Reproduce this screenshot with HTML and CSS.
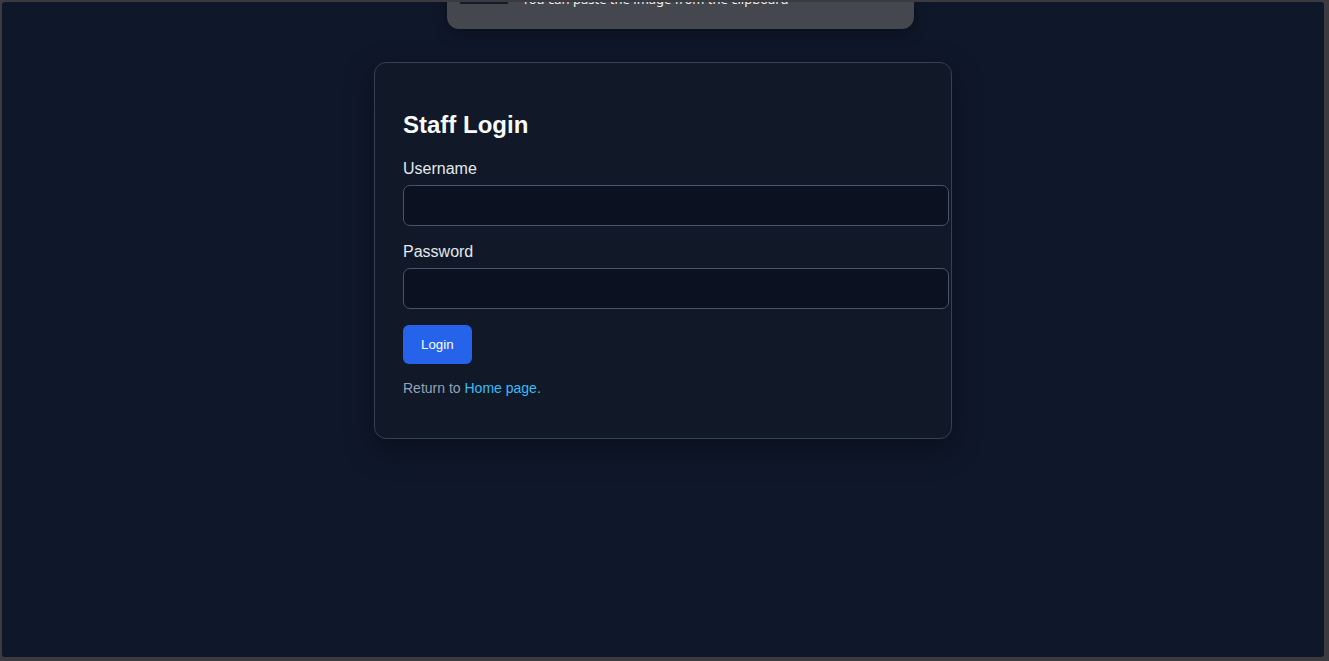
FILE: index.html
```html
<!DOCTYPE html>
<html lang="en">
<head>
    <meta charset="UTF-8">
    <meta name="viewport" content="width=device-width, initial-scale=1.0">
    <title>Staff Login</title>
    <link rel="stylesheet" href="styles.css">
</head>
<body>
<div class="window">
    <div class="toast">
        <div class="toast-thumb"></div>
        <span class="toast-text">You can paste the image from the clipboard</span>
    </div>

    <div class="card">
        <h2>Staff Login</h2>
        <form class="login-form" onsubmit="return false;">
            <label for="username">Username</label>
            <input type="text" id="username" class="first">
            <label for="password">Password</label>
            <input type="password" id="password">
            <button type="submit">Login</button>
        </form>
        <p class="back">Return to <a href="#">Home page</a>.</p>
    </div>
</div>
</body>
</html>
```

FILE: styles.css
```css
html, body {
    height: 100%;
}

body {
    margin: 0;
    background-color: #3b3b3f;
    font-family: "Liberation Sans", Arial, sans-serif;
}

.window {
    position: relative;
    box-sizing: border-box;
    height: calc(100vh - 6px);
    margin: 2px 5px 4px 2px;
    padding-top: 60px;
    background-color: #0f172a;
    border-radius: 3px;
    overflow: hidden;
}

.toast {
    position: absolute;
    top: -20px;
    left: 445px;
    width: 467px;
    height: 47px;
    background-color: #45474e;
    border-radius: 12px;
    box-shadow: 0 4px 14px rgba(0, 0, 0, 0.35);
}

.toast-thumb {
    position: absolute;
    left: 13px;
    top: 0;
    width: 48px;
    height: 22px;
    background-color: #151c2e;
}

.toast-text {
    position: absolute;
    left: 75px;
    top: 8px;
    font-family: "Noto Sans", sans-serif;
    font-size: 13px;
    line-height: 18px;
    color: #f1f1f3;
}

.card {
    box-sizing: border-box;
    width: 578px;
    margin: 0 auto;
    padding: 28px 28px 42px 28px;
    background-color: #111827;
    border: 1px solid #334155;
    border-radius: 12px;
    box-shadow: 0 10px 30px rgba(0, 0, 0, 0.35);
}

h2 {
    margin: 20px 0 21px;
    font-size: 24px;
    font-weight: bold;
    color: #f8fafc;
}

.login-form {
    display: flex;
    flex-direction: column;
    align-items: flex-start;
}

label {
    font-size: 16px;
    color: #e2e8f0;
    margin-bottom: 7px;
}

input {
    box-sizing: content-box;
    width: 520px;
    height: 39px;
    padding: 0 12px;
    margin: 0 0 16px;
    border: 1px solid #475569;
    border-radius: 7px;
    background-color: #0b1120;
    color: #e2e8f0;
    font-size: 15px;
}

input.first {
    margin-bottom: 17px;
}

button {
    height: 39px;
    padding: 0 18px;
    border: none;
    border-radius: 6px;
    background-color: #2563eb;
    color: #fff;
    font-family: "Liberation Sans", Arial, sans-serif;
    font-size: 13.3px;
    cursor: pointer;
}

.back {
    margin: 16px 0 0;
    font-size: 14px;
    color: #94a3b8;
}

.back a {
    color: #38bdf8;
    text-decoration: none;
}
```
